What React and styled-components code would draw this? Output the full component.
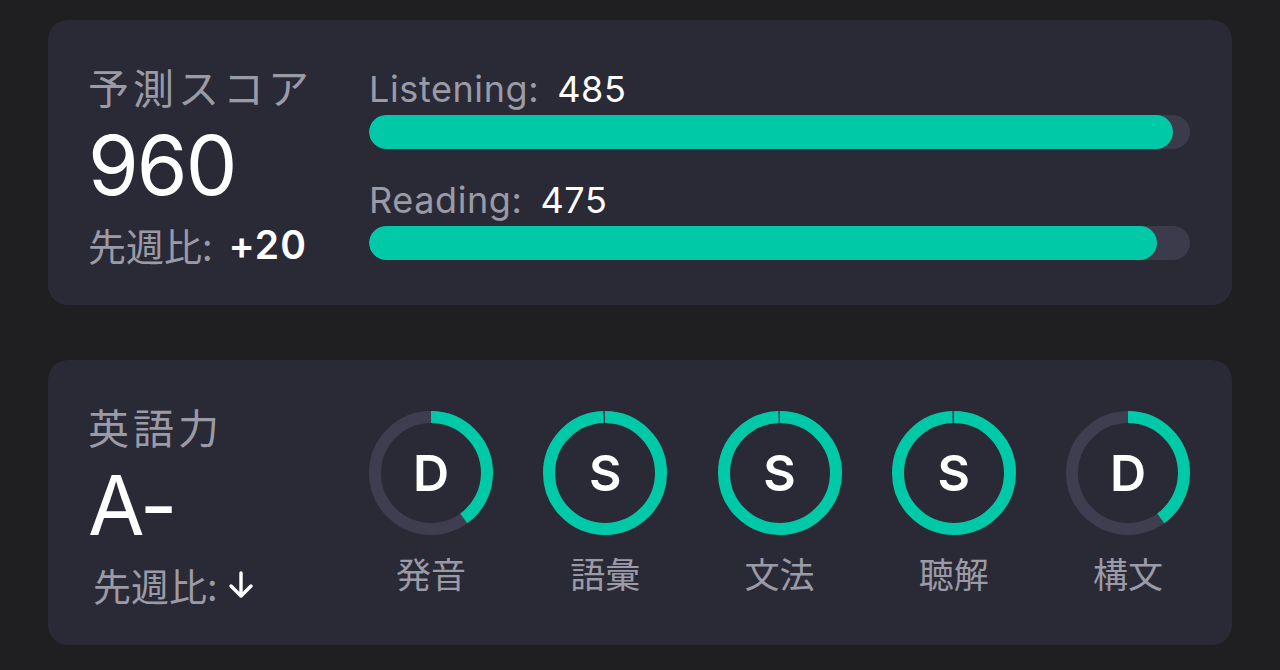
import React from "react";
import styled, { createGlobalStyle } from "styled-components";

const Global = createGlobalStyle`
  html, body {
    margin: 0;
    padding: 0;
    background: #1f1f21;
  }
  body {
    font-family: Inter, "Noto Sans CJK JP", sans-serif;
    color: #ffffff;
  }
`;

const Page = styled.div`
  width: 1280px;
  height: 670px;
  box-sizing: border-box;
  padding: 20px 48px 0;
  display: flex;
  flex-direction: column;
  gap: 55px;
`;

const Card = styled.section`
  height: 285px;
  box-sizing: border-box;
  background: #2a2a36;
  border-radius: 20px;
  padding: 42px 42px 0;
  display: flex;
`;

const LeftCol = styled.div`
  width: 279px;
  flex-shrink: 0;
  display: flex;
  flex-direction: column;
`;

const Title = styled.div`
  font-family: "Noto Sans CJK JP", sans-serif;
  font-size: 41px;
  line-height: 48px;
  color: #9b9aa7;
  letter-spacing: 4px;
  margin-left: -2px;
  white-space: nowrap;
`;

const BigValue = styled.div`
  font-family: Inter, sans-serif;
  font-size: 82px;
  font-weight: 400;
  line-height: ${(p) => p.$lh}px;
  letter-spacing: -2px;
  color: #ffffff;
  margin-left: -2px;
`;

const Delta = styled.div`
  display: flex;
  align-items: center;
  gap: ${(p) => p.$gap}px;
  height: 46px;
  padding-left: ${(p) => p.$indent}px;
`;

const DeltaLabel = styled.span`
  font-family: "Noto Sans CJK JP", sans-serif;
  font-size: 38px;
  line-height: 46px;
  color: #9b9aa7;
  margin-left: -2px;
`;

const DeltaValue = styled.span`
  font-family: Inter, sans-serif;
  font-size: 39px;
  font-weight: 600;
  line-height: 46px;
  letter-spacing: 1px;
  color: #ffffff;
`;

const Bars = styled.div`
  flex: 1;
  padding-top: 7px;
  display: flex;
  flex-direction: column;
`;

const BarLabel = styled.div`
  display: flex;
  gap: 18px;
  height: 40px;
  align-items: center;
  font-family: Inter, sans-serif;
  font-size: 36px;
  letter-spacing: 0.6px;
  margin-top: ${(p) => p.$mt}px;
  margin-bottom: 6px;
`;

const BarName = styled.span`
  color: #9b9aa7;
`;

const BarScore = styled.span`
  color: #ffffff;
`;

const Track = styled.div`
  height: 34px;
  border-radius: 17px;
  background: #3c3b4c;
  overflow: hidden;
`;

const Fill = styled.div`
  height: 100%;
  border-radius: 17px;
  background: #00c9a7;
`;

const Rings = styled.div`
  flex: 1;
  padding-top: 9px;
  display: flex;
  justify-content: space-between;
  align-items: flex-start;
`;

const RingItem = styled.div`
  width: 124px;
  display: flex;
  flex-direction: column;
  align-items: center;
  gap: 16px;
`;

const RingBox = styled.div`
  position: relative;
  width: 124px;
  height: 124px;
`;

const RingLetter = styled.span`
  position: absolute;
  inset: 0;
  display: flex;
  align-items: center;
  justify-content: center;
  font-family: Inter, sans-serif;
  font-size: 50px;
  font-weight: 600;
  color: #ffffff;
`;

const RingLabel = styled.div`
  font-family: "Noto Sans CJK JP", sans-serif;
  font-size: 35px;
  line-height: 44px;
  color: #9b9aa7;
`;

const Arrow = () => (
  <svg width="30" height="30" viewBox="0 0 28 30" fill="none">
    <path
      d="M14 3 V26 M4 16 L14 26 L24 16"
      stroke="#ffffff"
      strokeWidth="3.4"
      strokeLinecap="round"
      strokeLinejoin="round"
    />
  </svg>
);

function Ring({ letter, pct, label }) {
  const r = 56;
  const c = 2 * Math.PI * r;
  return (
    <RingItem>
      <RingBox>
        <svg width="124" height="124" viewBox="0 0 124 124">
          <circle cx="62" cy="62" r={r} fill="none" stroke="#3f3e51" strokeWidth="12" />
          <circle
            cx="62"
            cy="62"
            r={r}
            fill="none"
            stroke="#00c9a7"
            strokeWidth="12"
            strokeDasharray={`${c * pct} ${c}`}
            transform="rotate(-90 62 62)"
          />
        </svg>
        <RingLetter>{letter}</RingLetter>
      </RingBox>
      <RingLabel>{label}</RingLabel>
    </RingItem>
  );
}

const bars = [
  { name: "Listening:", score: 485, mt: 0 },
  { name: "Reading:", score: 475, mt: 31 },
];

const rings = [
  { letter: "D", pct: 0.4, label: "発音" },
  { letter: "S", pct: 0.994, label: "語彙" },
  { letter: "S", pct: 0.994, label: "文法" },
  { letter: "S", pct: 0.994, label: "聴解" },
  { letter: "D", pct: 0.4, label: "構文" },
];

export default function App() {
  return (
    <>
      <Global />
      <Page>
        <Card>
          <LeftCol>
            <Title>予測スコア</Title>
            <BigValue $lh={112}>960</BigValue>
            <Delta $gap={16} $indent={0}>
              <DeltaLabel>先週比:</DeltaLabel>
              <DeltaValue>+20</DeltaValue>
            </Delta>
          </LeftCol>
          <Bars>
            {bars.map((b) => (
              <React.Fragment key={b.name}>
                <BarLabel $mt={b.mt}>
                  <BarName>{b.name}</BarName>
                  <BarScore>{b.score}</BarScore>
                </BarLabel>
                <Track>
                  <Fill style={{ width: `${(b.score / 495) * 100}%` }} />
                </Track>
              </React.Fragment>
            ))}
          </Bars>
        </Card>
        <Card>
          <LeftCol>
            <Title>英語力</Title>
            <BigValue $lh={112}>A-</BigValue>
            <Delta $gap={8} $indent={5}>
              <DeltaLabel>先週比:</DeltaLabel>
              <Arrow />
            </Delta>
          </LeftCol>
          <Rings>
            {rings.map((r) => (
              <Ring key={r.label} {...r} />
            ))}
          </Rings>
        </Card>
      </Page>
    </>
  );
}
